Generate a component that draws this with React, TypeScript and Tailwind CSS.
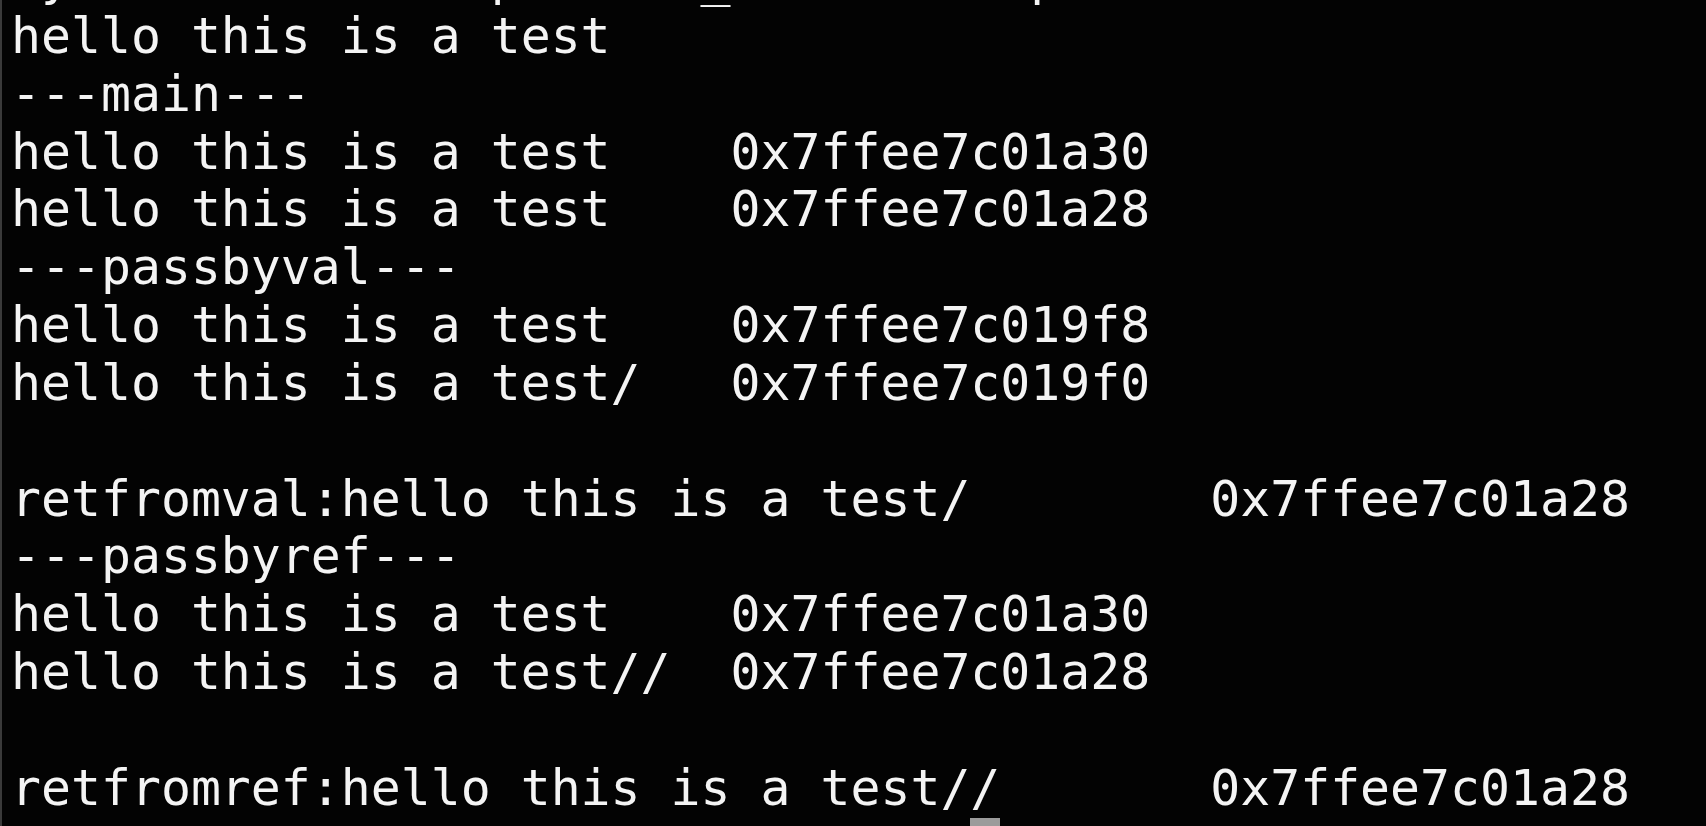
import React from 'react';

// Terminal scrollback: the top line is scrolled mostly out of view
const LINES: string[] = [
  'ry MacBook test passref_test % ./ap',
  'hello this is a test',
  '---main---',
  'hello this is a test    0x7ffee7c01a30',
  'hello this is a test    0x7ffee7c01a28',
  '---passbyval---',
  'hello this is a test    0x7ffee7c019f8',
  'hello this is a test/   0x7ffee7c019f0',
  '',
  'retfromval:hello this is a test/        0x7ffee7c01a28',
  '---passbyref---',
  'hello this is a test    0x7ffee7c01a30',
  'hello this is a test//  0x7ffee7c01a28',
  '',
  'retfromref:hello this is a test//       0x7ffee7c01a28',
];

const CURSOR_COL = 32;

export default function App() {
  return (
    <div className="h-screen w-full overflow-hidden bg-[#030303] flex">
      {/* window edge */}
      <div className="w-[2px] h-full bg-[#3a3a3a] shrink-0" />
      <div
        className="flex-1 pl-[9px] -mt-[50px] text-[#f4f4f4] text-[49.8px] leading-[57.85px] whitespace-pre"
        style={{ fontFamily: '"DejaVu Sans Mono", "Liberation Mono", monospace' }}
      >
        {LINES.map((line, i) => (
          <div key={i} className="h-[57.85px]">
            {line}
          </div>
        ))}
        <div className="h-[57.85px] flex">
          <span>{' '.repeat(CURSOR_COL)}</span>
          <span className="inline-block w-[30px] h-[57.85px] bg-[#9b9b9b]" />
        </div>
      </div>
    </div>
  );
}
